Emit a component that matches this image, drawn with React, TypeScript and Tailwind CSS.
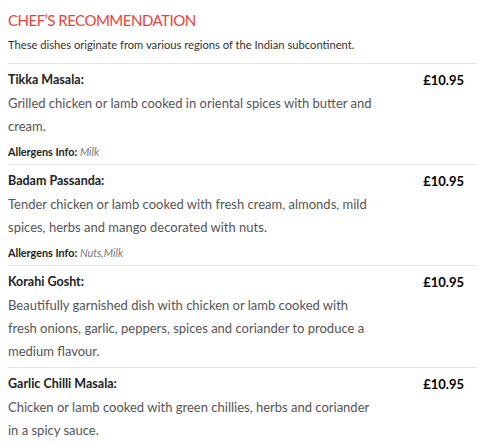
import React from 'react';

type Dish = {
  name: string;
  price: string;
  description: string;
  allergens?: string;
};

const DISHES: Dish[] = [
  {
    name: 'Tikka Masala:',
    price: '£10.95',
    description: 'Grilled chicken or lamb cooked in oriental spices with butter and cream.',
    allergens: 'Milk',
  },
  {
    name: 'Badam Passanda:',
    price: '£10.95',
    description:
      'Tender chicken or lamb cooked with fresh cream, almonds, mild spices, herbs and mango decorated with nuts.',
    allergens: 'Nuts,Milk',
  },
  {
    name: 'Korahi Gosht:',
    price: '£10.95',
    description:
      'Beautifully garnished dish with chicken or lamb cooked with fresh onions, garlic, peppers, spices and coriander to produce a medium flavour.',
  },
  {
    name: 'Garlic Chilli Masala:',
    price: '£10.95',
    description: 'Chicken or lamb cooked with green chillies, herbs and coriander in a spicy sauce.',
  },
];

function DishRow({ dish }: { dish: Dish }) {
  return (
    <div className="flex border-t border-[#e6e6e6] pt-[7px] pb-[4px]">
      <div className="flex-1">
        <h3 className="text-[12.5px] font-bold leading-[18px] text-[#222]">{dish.name}</h3>
        <p className="mt-[3px] max-w-[370px] text-[13px] leading-[23px] text-[#555]">{dish.description}</p>
        {dish.allergens && (
          <p className="mt-[6px] text-[10.8px] leading-[16px] text-[#222]">
            <span className="font-bold">Allergens Info: </span>
            <em className="text-[#777]">{dish.allergens}</em>
          </p>
        )}
      </div>
      <div className="pr-[13px] text-[13px] font-bold leading-[18px] text-black">{dish.price}</div>
    </div>
  );
}

export default function App() {
  return (
    <div className="min-h-screen bg-white pl-2 pt-[9px] font-['Lato',sans-serif]">
      <h2 className="text-[15px] leading-[22px] uppercase tracking-[-0.5px] text-[#e8453c]">
        Chef’s Recommendation
      </h2>
      <p className="mt-[6px] text-[11.2px] leading-[16px] text-[#333]">
        These dishes originate from various regions of the Indian subcontinent.
      </p>
      <div className="mt-[10px] border-b border-[#e6e6e6]">
        {DISHES.map((d) => (
          <DishRow key={d.name} dish={d} />
        ))}
      </div>
    </div>
  );
}
